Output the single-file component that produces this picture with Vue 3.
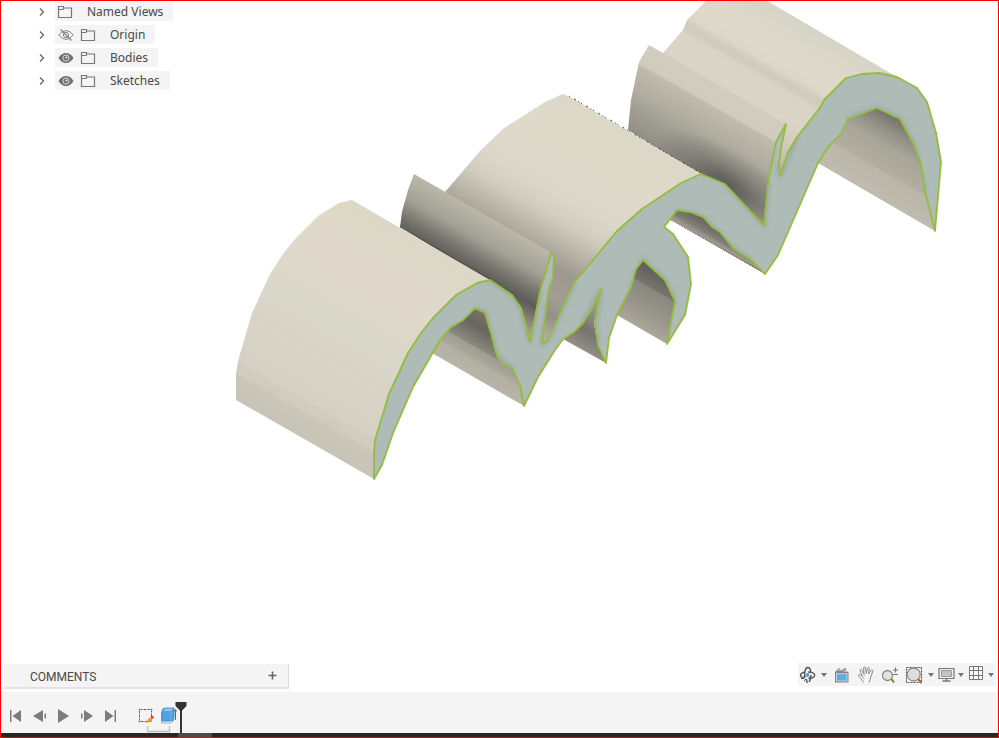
<script setup>
import { ref } from 'vue'

const nodes = ref([
  { name: 'Named Views', eye: null },
  { name: 'Origin', eye: 'hidden' },
  { name: 'Bodies', eye: 'shown' },
  { name: 'Sketches', eye: 'shown' },
])

const playback = [
  { label: 'Go to start', d: 'M6 6h1.500v12H6z M17 6v12L8.500 12z' },
  { label: 'Step back', d: 'M15 6v12L5 12z M16.500 9.500h1.500v5h-1.500z' },
  { label: 'Play', d: 'M6 5v14l11-7z' },
  { label: 'Step forward', d: 'M8 6v12l9-6z M5 9.500h1.500v5H5z' },
  { label: 'Go to end', d: 'M5 6v12l8.500-6z M14.500 6h1.500v12h-1.500z' },
]

const shades = [
  { id: 'left', v: [374, 479, 488, 279], s: [[0, '#c7c4b7'], [0.1, '#cac7ba'], [0.1, '#cfcbbf'], [0.15, '#d0ccc0'], [0.15, '#d4d0c4'], [0.35, '#d8d4c8'], [0.35, '#d7d4c7'], [0.54, '#dad8ca'], [0.56, '#ddd7ca'], [0.7, '#dfd8cb'], [0.87, '#e0d9cb'], [0.88, '#ded8c9'], [1, '#dcd7c7']] },
  { id: 'finA', v: [552, 253, 508, 330], s: [[0, '#bbb8ab'], [0.28, '#a29f94'], [0.48, '#75736c'], [0.62, '#5e5c58'], [0.72, '#75726d'], [0.85, '#989389'], [1, '#b8b1a4']] },
  { id: 'mid', v: [701, 174, 592, 365], s: [[0, '#dcd8c8'], [0.2, '#dfd9ca'], [0.4, '#ddd7ca'], [0.5, '#d0ccbe'], [0.6, '#b7b3a6'], [0.7, '#9d998f'], [0.82, '#a39e94'], [0.9, '#958f87'], [1, '#b5aea2']] },
  { id: 'finB', v: [786, 124, 737, 210], s: [[0, '#d0cdc0'], [0.2, '#cfcbbf'], [0.22, '#bfbcae'], [0.45, '#b1aea1'], [0.62, '#a19e93'], [0.85, '#918e85'], [1, '#aaa398']] },
  { id: 'right', v: [897, 77, 825, 202], s: [[0, '#d5d4c7'], [0.12, '#dbd7c9'], [0.28, '#e0d9cb'], [0.36, '#ddd7c9'], [0.4, '#d0cdbf'], [0.44, '#cfccbe'], [0.48, '#dad4c6'], [0.64, '#dcd5c7'], [0.82, '#cec8ba'], [1, '#b3aca0']] },
  { id: 'inR', v: [877, 108, 838, 176], s: [[0, '#77746d'], [0.18, '#939087'], [0.38, '#aaa79a'], [0.39, '#a9a699'], [0.66, '#b2afa2'], [0.67, '#bab7aa'], [1, '#bfbbae']] },
  { id: 'inM', v: [643, 260, 613, 313], s: [[0, '#5f5c58'], [0.33, '#77746d'], [0.34, '#89867e'], [0.7, '#99968b'], [1, '#aba69a']] },
  { id: 'inS', v: [601, 289, 570, 342], s: [[0, '#b3ada0'], [0.45, '#8d8981'], [0.7, '#77746d'], [1, '#918e85']] },
  { id: 'inL', v: [485, 313, 454, 367], s: [[0, '#77746d'], [0.25, '#69665f'], [0.54, '#8b887f'], [0.56, '#9f9c91'], [0.72, '#aaa79b'], [0.74, '#b2aea2'], [1, '#b9b5a8']] },
  { id: 'under', v: [705, 216, 690, 242], s: [[0, '#5f5c58'], [0.45, '#807d76'], [0.6, '#9b988e'], [1, '#8d8a81']] },
]

const surfaces = [
  { fill: 'right', p: '663,53 683,30 687,20 708,-1 764,-1 897,77 879,73 862,74 846,78 825,99 819,109 797,137 788,152 780,176 776,160 772,134 668,62' },
  { fill: 'finB', p: '649,45 786,124 776,142 768,183 766,227 750,213 725,186 701,175 628,130 631,100 639,62' },
  { fill: 'mid', p: '445,192 480,151 504,128 545,102 563,94 570,97 702,174 681,184 642,210 617,232 574,284 548,341 541,345 545,302 548,262 460,205' },
  { fill: 'finA', p: '414,174 552,253 541,292 531,344 520,308 510,295 490,282 400,227 402,212 408,190' },
  { fill: 'left', p: '236,400 236,374 238,361 252,313 270,274 283,254 295,239 318,216 339,203 352,200 490,280 477,284 456,296 433,319 421,334 408,354 389,395 375,441 374,479' },
  { fill: 'inR', p: '818,163 935,231 926,191 921,160 914,143 901,118 877,107 847,119 840,134 827,147' },
  { fill: 'under', p: '670,219 765,274 753,260 734,246 713,225 703,215 690,210 677,209' },
  { fill: 'inM', p: '617,315 667,344 676,301 666,279 643,259 635,269 630,287' },
  { fill: 'inS', p: '563,339 606,363 598,345 594,323 601,289 593,306 583,322' },
  { fill: 'inL', p: '432,353 524,406 521,385 514,369 503,362 498,356 491,330 486,313 475,307 450,327 439,340' },
]

const profile =
  '374,479 374,453 375,440 389,394 408,353 421,333 433,318 456,295 477,283 490,280 512,295 521,308 525,322 530,342 ' +
  '540,292 551,253 554,257 553,277 549,288 547,302 542,344 548,340 574,283 617,231 642,209 681,183 701,174 ' +
  '725,184 752,213 764,225 768,183 776,142 786,124 781,148 779,163 780,176 788,152 797,137 819,109 825,99 ' +
  '846,78 862,74 879,73 897,77 917,88 927,102 936,133 941,162 935,231 925,191 920,160 913,143 900,119 ' +
  '877,108 848,119 841,134 828,147 818,163 778,255 765,274 752,261 733,248 720,232 712,227 703,217 ' +
  '690,212 677,210 664,227 673,234 688,257 691,284 685,315 667,344 675,301 665,280 643,260 636,269 ' +
  '631,287 617,315 609,338 606,363 598,345 595,323 597,307 601,289 593,307 583,323 574,332 563,339 ' +
  '555,350 538,377 524,406 520,385 513,369 502,363 497,356 490,330 485,313 475,308 463,320 450,328 ' +
  '440,340 432,354 413,387 393,433 382,465'
</script>

<template>
  <div class="app">
    <main class="stage">
      <svg class="model" viewBox="0 0 999 660" role="img" aria-label="Extruded body">
        <defs>
          <linearGradient v-for="g in shades" :id="g.id" :key="g.id" gradientUnits="userSpaceOnUse"
            :x1="g.v[0]" :y1="g.v[1]" :x2="g.v[2]" :y2="g.v[3]">
            <stop v-for="(s, i) in g.s" :key="i" :offset="s[0]" :stop-color="s[1]" />
          </linearGradient>
          <radialGradient id="pocket" gradientUnits="userSpaceOnUse" cx="0" cy="0" r="1"
            gradientTransform="translate(726 184) rotate(33) scale(84 34)">
            <stop offset="0" stop-color="#4a4845" stop-opacity=".75" />
            <stop offset=".5" stop-color="#4a4845" stop-opacity=".3" />
            <stop offset="1" stop-color="#4a4845" stop-opacity="0" />
          </radialGradient>
          <filter id="soft" x="-5%" y="-5%" width="110%" height="110%"><feGaussianBlur stdDeviation="2" /></filter>
          <clipPath id="cut"><polygon :points="profile" /></clipPath>
          <clipPath id="fin"><polygon :points="surfaces[1].p" /></clipPath>
        </defs>
        <template v-for="s in surfaces" :key="s.fill">
          <polygon :points="s.p" :fill="`url(#${s.fill})`" />
          <rect v-if="s.fill === 'finB'" x="625" y="40" width="165" height="190" fill="url(#pocket)" clip-path="url(#fin)" />
        </template>
        <path class="speckle" d="M569 96 701 173" />
        <path class="speckle dense" d="M400 227 490 279M671 220 764 273" />
        <polygon class="face" :points="profile" />
        <g clip-path="url(#cut)">
          <path class="shadow" filter="url(#soft)"
            d="M490 280 512 295 521 308 530 342 540 292M547 302 542 344 548 340 574 283M725 184 764 225 768 183M779 163 780 176 797 137M925 191 913 143 900 119 877 108 848 119M752 261 733 248 703 217 677 210M675 301 665 280 643 260 631 287M598 345 595 323 601 289 583 323M513 369 497 356 485 313 475 308" />
        </g>
        <polygon class="edge" :points="profile" />
      </svg>

      <ul class="tree">
        <li v-for="n in nodes" :key="n.name">
          <button class="twist" :aria-label="`Expand ${n.name}`">
            <svg width="8" height="10" viewBox="0 0 8 10"><path d="M2 1.500 5.500 5 2 8.500" fill="none" stroke="#666" stroke-width="1.300" /></svg>
          </button>
          <div class="node">
            <button v-if="n.eye" class="eye" :aria-label="`Toggle ${n.name}`">
              <svg v-if="n.eye === 'shown'" width="16" height="12" viewBox="0 0 16 12">
                <path d="M.5 6Q3.500 1 8 1t7.500 5Q12.500 11 8 11T.5 6z" fill="#6e6e6e" />
                <circle cx="8" cy="6" r="3.100" fill="none" stroke="#e4e4e4" stroke-width=".9" /><circle cx="8.500" cy="5.500" r="1" fill="#f4f4f4" />
              </svg>
              <svg v-else width="16" height="12" viewBox="0 0 16 12" fill="none" stroke="#808080">
                <path d="M.8 6Q3.800 1.600 8 1.600T15.200 6Q12.200 10.400 8 10.400T.8 6z" /><circle cx="8" cy="6" r="2.600" /><path d="M2.500.5 13.500 11.500" stroke-width="1.300" />
              </svg>
            </button>
            <svg class="folder" width="16" height="14" viewBox="0 0 16 14" fill="none" stroke="#777" stroke-width="1.200">
              <path d="M1.500 12.500v-11h5v1.500h8v9.500zM1.500 4.500h4.500l1-1.500" />
            </svg>
            <span>{{ n.name }}</span>
          </div>
        </li>
      </ul>

      <div class="dock">
        <section class="comments">
          <h2>COMMENTS</h2>
          <button aria-label="Add comment">
            <svg width="9" height="9" viewBox="0 0 9 9"><path d="M4.500 .5v8M.5 4.500h8" stroke="#666" stroke-width="1.600" /></svg>
          </button>
        </section>

        <nav class="views" aria-label="Navigation">
          <button class="narrow" aria-label="Orbit">
            <svg width="18" height="18" viewBox="0 0 18 18" fill="none" stroke="#505050" stroke-width="1.300">
              <path d="M5.800 12C5 6 6.500 1.500 8.800 1.500c1.700 0 2.700 2 3 4.500" />
              <path d="M12 9c0 3-.8 5.500-2 7M7 14.500c.4 1.200 1 1.900 1.700 2" />
              <path d="M4 12C-.3 9.700 1.300 6.800 6 6.200M9 6c5.500 0 8 2.500 6 4.700-.9 1-2.700 1.500-4.500 1.700" />
              <path d="M2 12.500h3v-3M12 10.200l-2.500 2.200 2.500 2M5.300 14.800l1.500-1.800 2 1.500" stroke-width="1" />
              <circle cx="8.500" cy="9" r="1.900" fill="#3da4e8" stroke="none" />
            </svg>
          </button>
          <button class="caret" aria-label="Orbit options"><i></i></button>
          <button aria-label="Look at">
            <svg width="16" height="16" viewBox="0 0 16 16">
              <path d="M1 15.500V5l3.500-3.500h2L5 4l6.500-3 1 1.500L10 4.500h4.500v11z" fill="#858585" /><path d="M3.500 4 5 2.500M7.500 4l3-1.500" stroke="#ddd" stroke-width=".8" />
              <rect x="2.500" y="6.800" width="10.500" height="7.200" fill="#5cade3" stroke="#e7eef2" stroke-width=".7" />
            </svg>
          </button>
          <button aria-label="Pan">
            <svg width="18" height="18" viewBox="0 0 18 18" fill="#f8f8f8" stroke="#888" stroke-width="1" stroke-linejoin="round">
              <path d="M6.500 16.500C5 13 2.500 11 1 9.500c.5-1.500 2-1 4.500 1L3 4.500c0-1.300 1.300-1.500 1.800-.4L7 8 6.600 2c.1-1.400 1.700-1.400 1.900 0L9.300 7.500l1.200-5.300c.4-1.200 1.800-.9 1.700.3L11.700 8l2.500-3.600c.8-1 2-.2 1.600.9L13.700 11c-.3 2-1.200 3.500-1.700 5.500" />
              <path d="M5.500 10.500 7.500 13M7 8l.5 1.500" fill="none" stroke-width=".8" />
            </svg>
          </button>
          <button aria-label="Zoom">
            <svg width="18" height="18" viewBox="0 0 18 18" fill="none">
              <path d="m10 12.500 3 4" stroke="#a36b2c" stroke-width="2" /><circle cx="6.500" cy="9.500" r="5" fill="#e2e2e2" stroke="#8c8c8c" stroke-width="1.300" />
              <path d="M14.500 1.500v5M12 4h5M12 8.500h5" stroke="#777" stroke-width="1.200" />
            </svg>
          </button>
          <button aria-label="Zoom window">
            <svg width="18" height="18" viewBox="0 0 18 18" fill="none">
              <path d="M1.500 1.500h15v15h-15z" stroke="#555" stroke-width="1.200" stroke-dasharray="2 1" />
              <circle cx="8.700" cy="8.500" r="6.500" fill="#ddd" stroke="#8c8c8c" stroke-width="1.300" /><path d="m13 13 3.500 4" stroke="#a36b2c" stroke-width="2" />
            </svg>
          </button>
          <button class="caret" aria-label="Zoom options"><i></i></button>
          <button class="narrow" aria-label="Display settings">
            <svg width="17" height="15" viewBox="0 0 17 15" fill="none" stroke="#777">
              <path d="M1 1.500h15v10H1z" fill="#eee" stroke-width="1.200" /><path d="M3.500 3.500h10v6h-10z" fill="#c4c4c4" stroke="#999" /><path d="M8.500 11.500v2M4.500 14h8" stroke-width="1.500" />
            </svg>
          </button>
          <button class="caret" aria-label="Display options"><i></i></button>
          <button class="narrow" aria-label="Grid settings">
            <svg class="lift" width="14" height="14" viewBox="0 0 14 14" fill="#fafafa" stroke="#777"><path d="M.5 .5h13v13H.5zM4.500 .5v13M9.500 .5v13M.5 4.500h13M.5 9.500h13" /></svg>
          </button>
          <button class="caret" aria-label="Grid options"><i></i></button>
        </nav>
      </div>
    </main>

    <footer class="timeline">
      <div class="playback">
        <button v-for="b in playback" :key="b.label" :aria-label="b.label">
          <svg width="24" height="24" viewBox="0 0 24 24"><path :d="b.d" fill="#7c7c7c" /></svg>
        </button>
      </div>
      <div class="features">
        <button aria-label="Sketch">
          <svg width="16" height="18" viewBox="0 0 16 18" fill="none">
            <path d="M1.500 2.500h12v12h-12z" stroke="#666" stroke-dasharray="3 1" />
            <path d="M.5 1.500h2v2h-2zM12.500 1.500h2v2h-2zM.5 13.500h2v2h-2z" fill="#2a8fe0" stroke="#f4f4f4" stroke-width=".4" />
            <path d="m8 16 1-3 3.500-3 2 2-3.500 3.500z" fill="#f6a21f" /><path d="m12.500 10 1.500-1.500 2 1.500-1.500 2z" fill="#e8343d" />
          </svg>
        </button>
        <button aria-label="Extrude">
          <svg width="16" height="18" viewBox="0 0 16 18">
            <path d="M.5 5v11h9.500l3-3" fill="none" stroke="#aaa" />
            <path d="M1 4.500Q1 1 4.500 1H13v9.500Q13 14 9.500 14H1z" fill="#4fa3de" stroke="#2f83bd" stroke-width=".8" /><path d="M1.800 4 4.300 1.600h8L10 4z" fill="#8cc8f0" /><path d="M10 4.500v9" stroke="#7dbde9" stroke-width=".8" />
            <path d="M14.500 3v10M13 4.500l1.500-2 1.500 2" fill="none" stroke="#666" />
          </svg>
        </button>
        <svg class="bracket" width="24" height="7" viewBox="0 0 24 7"><path d="M.5 0v5.500h22V0" fill="none" stroke="#bdbdbd" stroke-width="1.300" /></svg>
        <svg class="marker" width="12" height="31" viewBox="0 0 12 31"><path d="M.5 0h11v4L7 8.500V31H5V8.500L.5 4z" fill="#333" /></svg>
      </div>
    </footer>
    <div class="strip"><span></span></div>
  </div>
</template>

<style>
body { margin: 0; background: #fff; }
</style>

<style scoped>
.app {
  min-height: 100vh;
  display: flex;
  flex-direction: column;
  position: relative;
  font-family: "Noto Sans", "Liberation Sans", sans-serif;
  font-size: 12px;
  color: #484848;
}
.app::after {
  content: "";
  position: absolute;
  inset: 0;
  border: 1px solid #f00;
  pointer-events: none;
}
button {
  border: 0;
  padding: 0;
  margin: 0;
  background: none;
  display: flex;
  align-items: center;
  justify-content: center;
}
svg { display: block; flex: none; }
.stage {
  flex: 1;
  position: relative;
  display: flex;
  flex-direction: column;
  justify-content: space-between;
}
.model {
  position: absolute;
  top: 0;
  left: 0;
  width: 100%;
}
.face { fill: #aebbb7; }
.edge { fill: none; stroke: #93bd3a; stroke-width: 1.8; stroke-linejoin: round; }
.shadow { fill: none; stroke: #75847f; stroke-width: 3; opacity: .4; }
.speckle { fill: none; stroke: #333; stroke-width: 1; stroke-dasharray: 1 5 2 3 1 2; }
.dense { stroke-dasharray: 2 1; opacity: .6; }
.tree {
  position: relative;
  list-style: none;
  margin: 0;
  padding: 2px 0 0 36px;
  display: flex;
  flex-direction: column;
  gap: 4px;
}
.tree li { display: flex; height: 19px; }
.twist { width: 12px; margin-right: 7px; }
.node {
  display: flex;
  align-items: center;
  background: #f4f4f4;
  padding: 0 10px 0 2px;
}
.eye { width: 17px; margin-right: 6px; }
.folder { margin-right: 14px; }
.node span { line-height: 19px; }
.dock {
  position: relative;
  display: flex;
  justify-content: space-between;
  align-items: flex-start;
  padding: 0 3px 3px 4px;
}
.comments {
  width: 285px;
  height: 25px;
  margin-top: 1px;
  box-sizing: border-box;
  display: flex;
  align-items: center;
  justify-content: space-between;
  padding: 0 11px 0 26px;
  background: #f4f4f4;
  border-right: 1px solid #ddd;
  border-bottom: 2px solid #e2e2e2;
}
.comments h2 {
  margin: 0;
  padding-top: 2px;
  font-family: Roboto, "Liberation Sans", sans-serif;
  font-size: 12px;
  font-weight: 400;
}
.views { display: flex; height: 23px; background: #f4f4f4; }
.views button { width: 24px; }
.views .narrow { width: 20px; }
.views .caret { width: 10px; }
.views .narrow:first-child + .caret { width: 12px; }
.caret i {
  border: 3px solid transparent;
  border-top: 4px solid #777;
  border-bottom: 0;
}
.lift { margin-bottom: 3px; }
.timeline {
  display: flex;
  align-items: center;
  height: 41px;
  padding: 0 4px;
  background: #f4f4f4;
}
.playback { display: flex; padding-top: 6px; }
.playback button { width: 24px; height: 24px; }
.features {
  position: relative;
  display: flex;
  gap: 7px;
  margin-left: 14px;
  padding-top: 6px;
}
.bracket { position: absolute; left: 9px; top: 25px; }
.marker { position: absolute; left: 37px; top: 1px; }
.strip { height: 5px; padding-left: 178px; background: #262626; }
.strip span { display: block; width: 34px; height: 5px; background: #4b4b4b; }
</style>
